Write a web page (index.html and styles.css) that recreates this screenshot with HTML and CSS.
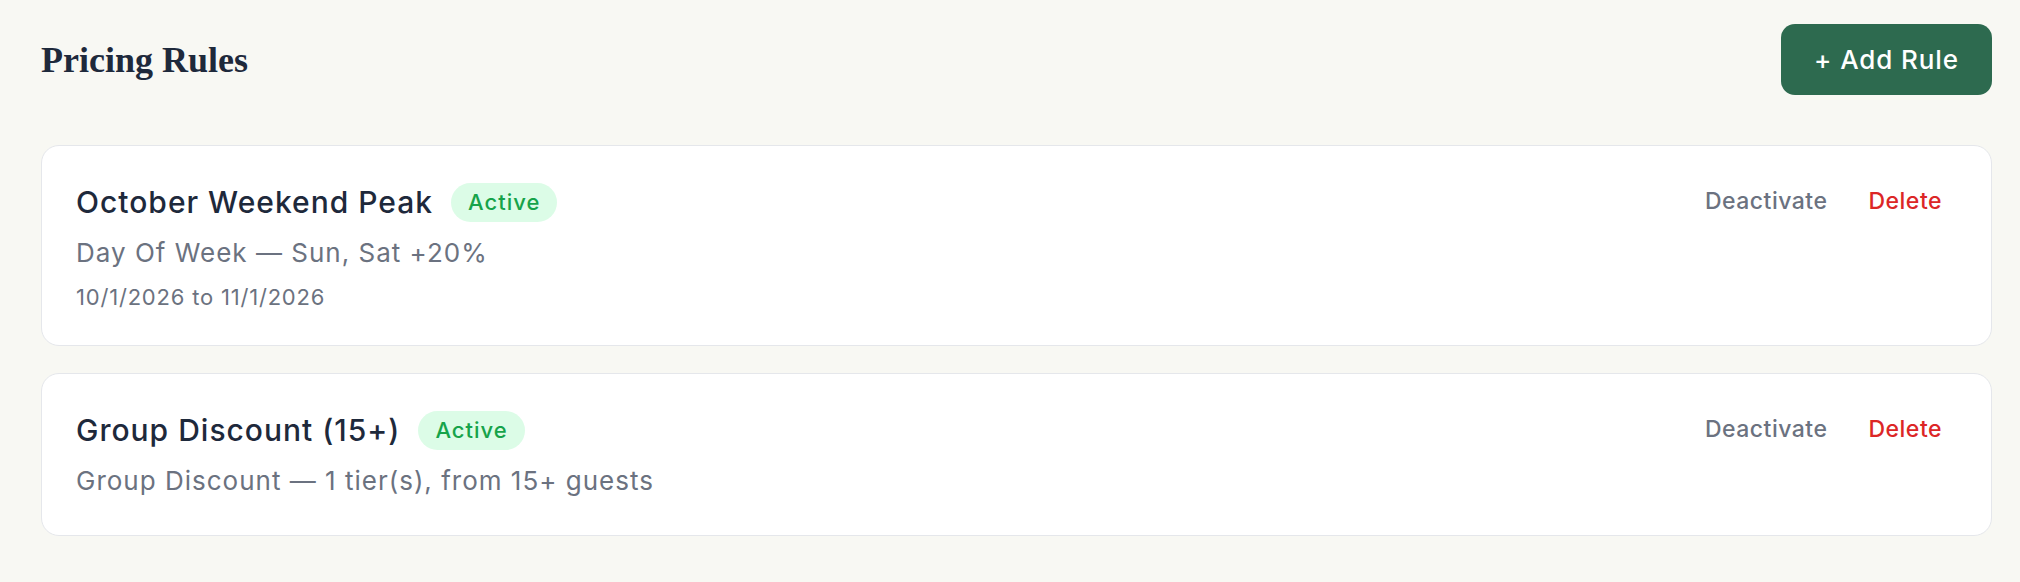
FILE: index.html
```html
<!DOCTYPE html>
<html lang="en">
<head>
<meta charset="utf-8">
<title>Pricing Rules</title>
<link rel="stylesheet" href="styles.css">
</head>
<body>
<main class="page">
  <header class="page-header">
    <h1 class="page-title">Pricing Rules</h1>
    <button class="btn-primary">+ Add Rule</button>
  </header>
  <section class="rules">
    <article class="rule-card">
      <div class="rule-info">
        <div class="rule-title-row">
          <h2 class="rule-name">October Weekend Peak</h2>
          <span class="badge">Active</span>
        </div>
        <p class="rule-desc">Day Of Week — Sun, Sat +20%</p>
        <p class="rule-dates">10/1/2026 to 11/1/2026</p>
      </div>
      <div class="rule-actions">
        <button class="link-btn">Deactivate</button>
        <button class="link-btn danger">Delete</button>
      </div>
    </article>
    <article class="rule-card">
      <div class="rule-info">
        <div class="rule-title-row">
          <h2 class="rule-name">Group Discount (15+)</h2>
          <span class="badge">Active</span>
        </div>
        <p class="rule-desc">Group Discount — 1 tier(s), from 15+ guests</p>
      </div>
      <div class="rule-actions">
        <button class="link-btn">Deactivate</button>
        <button class="link-btn danger">Delete</button>
      </div>
    </article>
  </section>
</main>
</body>
</html>
```
FILE: styles.css
```css
* { box-sizing: border-box; }
html, body {
  margin: 0;
  padding: 0;
  background: #f8f8f3;
  font-family: Inter, "Noto Sans", sans-serif;
}
.page {
  padding: 24px 28px 0 41px;
}
.page-header {
  display: flex;
  align-items: center;
  justify-content: space-between;
}
.page-title {
  margin: 0;
  font-family: "Liberation Serif", "Times New Roman", serif;
  font-weight: 700;
  font-size: 36px;
  line-height: 44px;
  color: #1e293b;
}
.btn-primary {
  font-family: Inter, sans-serif;
  font-size: 26px;
  line-height: 39px;
  letter-spacing: 0.9px;
  padding: 16px 33px;
  border: 0;
  border-radius: 14px;
  background: #2d6a4f;
  color: #ffffff;
  font-weight: 500;
}
.rules {
  margin-top: 50px;
  display: flex;
  flex-direction: column;
  gap: 27px;
}
.rule-card {
  background: #ffffff;
  border: 1px solid #e5e7eb;
  border-radius: 18px;
  padding: 34px 34px 32px 34px;
  display: flex;
  justify-content: space-between;
  align-items: flex-start;
}
.rule-title-row {
  display: flex;
  align-items: center;
  gap: 18px;
}
.rule-name {
  margin: 0;
  font-size: 30px;
  line-height: 45px;
  letter-spacing: 1px;
  font-weight: 500;
  color: #1e293b;
}
.badge {
  background: #dcfce7;
  color: #16a34a;
  font-size: 22px;
  line-height: 39px;
  letter-spacing: 1px;
  padding: 0 17px;
  border-radius: 999px;
  font-weight: 500;
}
.rule-desc {
  margin: 9px 0 0 0;
  font-size: 26px;
  line-height: 38px;
  letter-spacing: 1px;
  color: #6b7280;
}
.rule-desc:last-child {
  margin-bottom: 3px;
}
.rule-dates {
  margin: 10px 0 0 0;
  font-size: 22px;
  line-height: 31px;
  letter-spacing: 0.8px;
  color: #6b7280;
}
.rule-actions {
  display: flex;
  gap: 11px;
}
.link-btn {
  background: none;
  border: 0;
  padding: 0 15px;
  font-family: Inter, sans-serif;
  font-size: 23px;
  line-height: 42px;
  letter-spacing: 0.5px;
  color: #6b7280;
  font-weight: 500;
}
.link-btn.danger {
  color: #dc2626;
}
```
